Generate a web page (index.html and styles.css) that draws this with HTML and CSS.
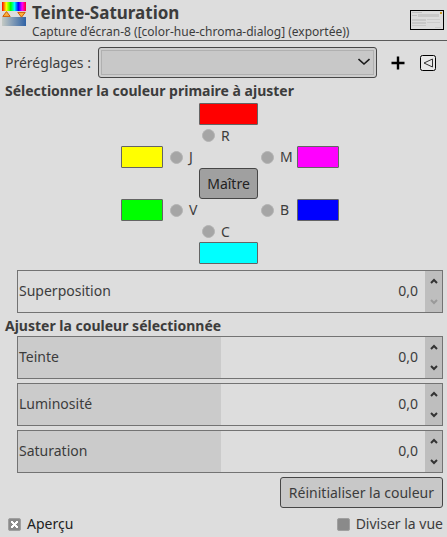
FILE: index.html
```html
<!DOCTYPE html>
<html lang="fr">
<head>
<meta charset="utf-8">
<title>Teinte-Saturation</title>
<link rel="stylesheet" href="styles.css">
</head>
<body>
<svg class="defs" aria-hidden="true">
  <symbol id="up" viewBox="0 0 8 6"><path d="M1 5L4 2L7 5" fill="none" stroke="currentColor" stroke-width="2"/></symbol>
  <symbol id="down" viewBox="0 0 8 6"><path d="M1 1L4 4L7 1" fill="none" stroke="currentColor" stroke-width="2"/></symbol>
</svg>
<header class="header">
  <svg class="logo" viewBox="0 0 24 24" aria-hidden="true">
    <defs>
      <linearGradient id="hue">
        <stop offset="0" stop-color="#f00"/><stop offset=".18" stop-color="#ff0"/><stop offset=".36" stop-color="#0f0"/>
        <stop offset=".52" stop-color="#0ff"/><stop offset=".68" stop-color="#00f"/><stop offset=".84" stop-color="#f0f"/><stop offset="1" stop-color="#f02"/>
      </linearGradient>
      <linearGradient id="sat"><stop offset="0" stop-color="#c5cac4"/><stop offset="1" stop-color="#2f62a5"/></linearGradient>
    </defs>
    <rect width="24" height="9" fill="url(#hue)"/>
    <rect y="15" width="24" height="9" fill="url(#sat)"/>
    <path d="M.8 14.4L4.5 9.6L8.2 14.4ZM15.8 10.4H23.2L19.5 15.2Z" fill="#fcaf3e" stroke="#ce5c00"/>
  </svg>
  <div class="titles">
    <h1 class="title">Teinte-Saturation</h1>
    <p class="subtitle">Capture d’écran-8 ([color-hue-chroma-dialog] (exportée))</p>
  </div>
  <svg class="thumb" viewBox="0 0 34 20" aria-hidden="true">
    <rect x=".5" y=".5" width="33" height="19" fill="#dcdcdc" stroke="#000"/>
    <path d="M2 2.5H12M2 5.5H7" stroke="#c0c0c0"/>
    <path d="M8 4H29V7H8ZM2 9H16V11H2ZM2 12H16V14H2ZM2 15H16V16H2Z" fill="#c8c8c8"/>
    <path d="M17 9.5H30M17 12.5H30M25 17.5H31" stroke="#ccc"/>
    <path d="M30 2H32V4H30Z" fill="#c8961e"/>
  </svg>
</header>
<main class="body">
  <div class="presets">
    <label for="preset">Préréglages :</label>
    <div class="combo">
      <select id="preset"><option></option></select>
      <svg class="chevron" viewBox="0 0 12 8" aria-hidden="true"><path d="M.5 1L6 6L11.5 1" fill="none" stroke="#1c1c1c" stroke-width="1.6"/></svg>
    </div>
    <button class="icon" type="button" aria-label="Ajouter"><svg width="14" height="14" viewBox="0 0 14 14"><path d="M7 .5V13.5M.5 7H13.5" stroke="#000" stroke-width="2.4"/></svg></button>
    <button class="icon" type="button" aria-label="Menu"><svg width="16" height="16" viewBox="0 0 16 16"><rect x=".5" y=".5" width="15" height="15" rx="2" fill="#e8e8e8" stroke="#000"/><path d="M12.5 4V12L4 8Z" fill="none" stroke="#333"/></svg></button>
  </div>

  <h2 class="heading">Sélectionner la couleur primaire à ajuster</h2>
  <div class="indent">
    <div class="wheel">
      <span class="swatch mid red"></span>
      <label class="choice mid"><input type="radio" name="range">R</label>
      <div class="pair left"><span class="swatch yellow"></span><label class="choice"><input type="radio" name="range">J</label></div>
      <div class="pair right"><label class="choice"><input type="radio" name="range">M</label><span class="swatch magenta"></span></div>
      <button class="button master mid" type="button">Maître</button>
      <div class="pair left"><span class="swatch green"></span><label class="choice"><input type="radio" name="range">V</label></div>
      <div class="pair right"><label class="choice"><input type="radio" name="range">B</label><span class="swatch blue"></span></div>
      <label class="choice mid"><input type="radio" name="range">C</label>
      <span class="swatch mid cyan"></span>
    </div>
    <div class="scale overlap">
      <label for="overlap">Superposition</label><input id="overlap" type="text" value="0,0">
      <div class="steps">
        <button type="button" aria-label="Augmenter"><svg><use href="#up"/></svg></button>
        <button type="button" aria-label="Diminuer" disabled><svg><use href="#down"/></svg></button>
      </div>
    </div>
  </div>

  <h2 class="heading">Ajuster la couleur sélectionnée</h2>
  <div class="indent scales">
    <div class="scale half">
      <label for="hue-value">Teinte</label><input id="hue-value" type="text" value="0,0">
      <div class="steps">
        <button type="button" aria-label="Augmenter"><svg><use href="#up"/></svg></button>
        <button type="button" aria-label="Diminuer"><svg><use href="#down"/></svg></button>
      </div>
    </div>
    <div class="scale half">
      <label for="light-value">Luminosité</label><input id="light-value" type="text" value="0,0">
      <div class="steps">
        <button type="button" aria-label="Augmenter"><svg><use href="#up"/></svg></button>
        <button type="button" aria-label="Diminuer"><svg><use href="#down"/></svg></button>
      </div>
    </div>
    <div class="scale half">
      <label for="sat-value">Saturation</label><input id="sat-value" type="text" value="0,0">
      <div class="steps">
        <button type="button" aria-label="Augmenter"><svg><use href="#up"/></svg></button>
        <button type="button" aria-label="Diminuer"><svg><use href="#down"/></svg></button>
      </div>
    </div>
    <button class="button reset" type="button">Réinitialiser la couleur</button>
  </div>

  <div class="footer">
    <label class="check strong"><input type="checkbox" checked>Aperçu</label>
    <label class="check"><input type="checkbox">Diviser la vue</label>
  </div>
</main>
</body>
</html>
```
FILE: styles.css
```css
* { box-sizing: border-box; }

body {
  margin: 0;
  background: #ddd;
  color: #3c3c3c;
  font: 14px/20px "Noto Sans", "Open Sans", sans-serif;
}

button, input, select { font: inherit; color: inherit; margin: 0; }
h1, h2, p { margin: 0; }
svg { display: block; }
.defs { display: none; }

.header {
  display: flex;
  align-items: center;
  gap: 6px;
  height: 41px;
  padding: 0 3px 0 2px;
  border-bottom: 1px solid #5a5a5a;
}
.logo { width: 24px; height: 24px; align-self: flex-start; margin-top: 2px; }
.titles { flex: 1; white-space: nowrap; padding-top: 2px; }
.title { font-size: 17px; line-height: 22px; }
.subtitle { font-size: 12px; line-height: 16px; }
.thumb { width: 34px; height: 20px; }

.body { padding: 6px 4px 0 5px; }

.presets { display: flex; align-items: center; }
.combo { position: relative; flex: 1; margin: 0 14px 0 7px; }
.combo select {
  display: block;
  appearance: none;
  width: 100%;
  height: 31px;
  border: 1px solid #464646;
  border-radius: 3px;
  background: #c8c8c8;
  box-shadow: inset 0 0 0 2px #cdcdcd, inset 0 0 0 3px #b0b0b0;
}
.chevron { position: absolute; right: 7px; top: 11px; width: 12px; height: 8px; pointer-events: none; }
.icon { border: 0; padding: 0; background: none; }
.icon + .icon { margin: 0 7px 0 15px; }

.heading { font-size: 14px; line-height: 20px; padding-top: 3px; font-weight: 700; }
.indent { padding-left: 12px; }

.wheel {
  display: grid;
  grid-template-columns: 78px 59px 81px;
  grid-template-rows: 22px 21px 22px 31px 22px 21px 22px;
  justify-content: center;
  padding-top: 2px;
}
.mid { grid-column: 2; }
.left { grid-column: 1; }
.right { grid-column: 3; padding-left: 3px; }
.pair { display: flex; justify-content: space-between; }
.left .choice { width: 29px; }
.swatch { width: 42px; height: 22px; border: 1px solid #646464; border-radius: 1px; }
.swatch.mid { width: 59px; }
.red { background: #f00; }
.yellow { background: #ff0; }
.magenta { background: #f0f; }
.green { background: #0f0; }
.blue { background: #00f; }
.cyan { background: #0ff; }

.choice { display: flex; align-items: center; gap: 6px; }
.choice.mid { padding-left: 3px; }
.choice input {
  appearance: none;
  width: 13px;
  height: 13px;
  flex: none;
  border: 1px solid #b4b4b4;
  border-radius: 50%;
  background: #a5a5a5;
}

.button {
  height: 31px;
  padding: 0 6px;
  border: 1px solid #464646;
  border-radius: 3px;
  background: #c8c8c8;
  white-space: nowrap;
}
.master { background: #a0a0a0; color: #222; }

.scale {
  display: flex;
  align-items: stretch;
  height: 43px;
  padding-left: 1px;
  border: 1px solid #737373;
}
.scale label { align-self: center; padding-bottom: 2px; }
.scale input {
  flex: 1;
  min-width: 0;
  padding: 0 7px 2px 0;
  border: 0;
  background: none;
  text-align: right;
}
.overlap { margin-top: 6px; }
.half { background: linear-gradient(90deg, #cbcbcb 50%, transparent 50%) 0 0 / calc(100% - 17px) 100% no-repeat; }
.steps { display: grid; grid-template-rows: 1fr 1fr; width: 17px; background: #bebebe; }
.steps button { display: grid; place-items: center; border: 0; padding: 0; background: none; color: #333; }
.steps button:disabled { color: #999; }
.steps svg { width: 8px; height: 6px; }

.scales { display: flex; flex-direction: column; gap: 4px; }
.reset { align-self: flex-end; padding: 0 8px; }

.footer { display: flex; justify-content: space-between; padding: 6px 0 3px 3px; }
.check { display: flex; align-items: center; gap: 6px; }
.strong { color: #222; }
.check input {
  appearance: none;
  width: 13px;
  height: 13px;
  border: 1px solid #a0a0a0;
  border-radius: 2px;
  background: #8a8a8a;
}
.check input:checked {
  display: grid;
  place-items: center;
}
.check input:checked::before {
  content: "";
  width: 7px;
  height: 7px;
  background:
    linear-gradient(45deg, transparent 36%, #fff 36% 64%, transparent 64%),
    linear-gradient(-45deg, transparent 36%, #fff 36% 64%, transparent 64%);
}
```
